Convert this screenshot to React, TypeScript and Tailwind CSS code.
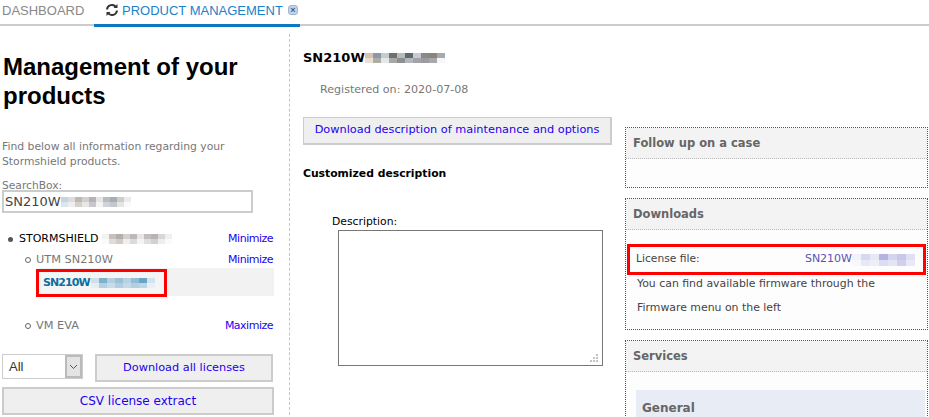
import React from 'react';

const FONT = "font-['DejaVu_Sans',sans-serif]";

// mosaic that hides the serial numbers
const Mosaic: React.FC<{ rows: string[][]; w?: number; h?: number }> = ({ rows, w = 7, h = 5 }) => (
  <svg width={rows[0].length * w} height={rows.length * h} className="block shrink-0">
    {rows.map((row, y) =>
      row.map((c, x) => <rect key={`${x}-${y}`} x={x * w} y={y * h} width={w} height={h} fill={c} />)
    )}
  </svg>
);

const greyRows = [
  ['#f4f2f0', '#c8c0bc', '#b4aeac', '#d4d0d0', '#bcb8ba', '#e6e4e6', '#c0bcc0', '#b8b2b4', '#d8d6d6', '#f0f0f0'],
  ['#fafafa', '#e0dcd8', '#d0ccca', '#f0eeee', '#dcdadc', '#f4f4f4', '#e0dee0', '#d4d0d0', '#eeeeee', '#fafafa'],
];
const inputRows = [
  ['#c4d4e0', '#dcdcdc', '#bcb8b4', '#d4d0d0', '#b4b4b8', '#e6e4e6', '#b8bcc0', '#a8acb4', '#d0ccc8', '#e8ecf0'],
  ['#dce6ee', '#eeeeee', '#d4d0cc', '#e8e6e6', '#c8c8cc', '#f4f4f4', '#d0d4d8', '#c4c8cc', '#e4e4e4', '#fafafa'],
];
const titleRows = [
  ['#d8c4ac', '#8a98aa', '#c4ccd0', '#70706e', '#b8bcb8', '#606870', '#c8ccd0', '#8a8a8c', '#8c8478', '#a8a8b0'],
  ['#e8e0d4', '#b0aca4', '#e4e8e8', '#a8a8a4', '#8c9090', '#b4b8bc', '#a4a4a8', '#9c9ca0', '#a8a8ac', '#f4f6f8'],
];
const blueRows = [
  ['#d0e0ea', '#7fb0cc', '#b4d0e0', '#9cc0d6', '#b8d2e2', '#94bcd4', '#6aa4c4', '#d4e4ee'],
  ['#e4eef4', '#b4d0e0', '#c8dce8', '#b0cee0', '#c4dae6', '#b4d0e0', '#bcd6e4', '#e8f0f6'],
];
const lilacRows = [
  ['#f2f2fa', '#d8d8f0', '#e8e8f6', '#b4b4e2', '#d4d4ee', '#c8c8ea', '#e0e0f4'],
  ['#f8f8fc', '#e8e8f6', '#eeeef8', '#dcdcf2', '#e4e4f4', '#d0d0ec', '#e8e8f6'],
];

const Panel: React.FC<{ title: string; className: string; children?: React.ReactNode }> = ({ title, className, children }) => (
  <div className={`border border-dotted border-[#555] bg-[#fdfdfd] ${className}`}>
    <div className="h-[31px] flex items-center pl-[7px] pt-[2px] bg-[#f3f3f3] border-b border-dotted border-[#bbb] text-[11.5px] font-bold text-[#666]">
      {title}
    </div>
    {children}
  </div>
);

const App: React.FC = () => {
  return (
    <div className={`w-[929px] h-[417px] overflow-hidden bg-white text-[12px] ${FONT}`}>
      {/* Tabs */}
      <div className="h-[26px] flex font-['Liberation_Sans',sans-serif] text-[13px] border-b-2 border-b-[#ccc]">
        <div className="pl-[2px] w-[94px] h-[22px] flex items-center text-[#888]">DASHBOARD</div>
        <div className="w-[206px] h-[27px] pl-[11px] flex items-center whitespace-nowrap border-b-[3px] border-b-[#0a78c2] text-[#1a82c8]">
          <svg width="14" height="14" viewBox="0 0 14 14" fill="none" stroke="#333" strokeWidth="2" className="mr-[3px] mb-[5px]">
            <path d="M2 6.5A5 5 0 0 1 11 4" />
            <path d="M12 7.5A5 5 0 0 1 3 10" />
            <path d="M12.5 1v4h-4z" fill="#333" strokeWidth="0" />
            <path d="M1.5 13V9h4z" fill="#333" strokeWidth="0" />
          </svg>
          <span className="pb-[2px]">PRODUCT MANAGEMENT</span>
          <span className="ml-[5px] mb-[5px] w-[10px] h-[10px] rounded-[3px] bg-[#c4d4ea] border border-[#9db4d4] text-[#44608c] text-[9px] leading-[8px] text-center font-bold">×</span>
        </div>
      </div>

      <div className="flex">
        {/* Left column */}
        <div className="w-[290px] h-[391px] shrink-0 mt-[8px] border-r border-dashed border-r-[#c4c4c4] pl-[2px]">
          <h1 className="mt-[18px] ml-[1px] w-[270px] text-[24px] leading-[29px] font-bold text-black font-['Liberation_Sans',sans-serif]">
            Management of your products
          </h1>
          <p className="mt-[29px] w-[280px] text-[10.8px] leading-[15px] text-[#777]">
            Find below all information regarding your Stormshield products.
          </p>
          <div className="mt-[9px] text-[10.7px] leading-[15px] text-[#777]">SearchBox:</div>
          <div className="w-[251px] h-[23px] -mt-[3px] border-2 border-[#ccc] flex items-center pl-[1px] text-[13px] text-[#444]">
            SN210W
            <Mosaic rows={inputRows} />
          </div>

          <div className="mt-[17px] w-[272px] flex flex-col">
            <div className="h-[18px] flex items-center">
              <span className="ml-[6px] mr-[6px] w-[5px] h-[5px] rounded-full bg-[#555]" />
              <span className="text-[11px] text-black">STORMSHIELD</span>
              <span className="ml-[3px]"><Mosaic rows={greyRows} /></span>
              <a className="ml-auto mr-[1px] text-[11px] tracking-[-0.5px] text-[#1c00f0]">Minimize</a>
            </div>
            <div className="mt-[3px] h-[18px] flex items-center">
              <span className="ml-[23px] mr-[5px] w-[6px] h-[6px] rounded-full border border-[#666]" />
              <span className="text-[11.3px] text-[#777]">UTM SN210W</span>
              <a className="ml-auto mr-[1px] text-[11px] tracking-[-0.5px] text-[#1c00f0]">Minimize</a>
            </div>
            <div className="h-[28px] ml-[34px] -mt-[1px] flex items-stretch">
              <div className="w-[2px]" />
              <div className="flex-1 bg-[#f2f2f2]">
                <div className="w-[131px] h-[28px] mt-[1px] -ml-[2px] border-[3px] border-[#f00] flex items-center pl-[4px] font-bold text-[11px] tracking-[-0.9px] text-[#0b6f9f] bg-[#f5f5f5]">
                  SN210W
                  <span className="ml-[1px]"><Mosaic rows={blueRows} w={8} h={5} /></span>
                </div>
              </div>
            </div>
            <div className="mt-[21px] h-[18px] flex items-center">
              <span className="ml-[23px] mr-[5px] w-[6px] h-[6px] rounded-full border border-[#666]" />
              <span className="text-[11.3px] text-[#777]">VM EVA</span>
              <a className="ml-auto mr-[1px] text-[11px] tracking-[-0.5px] text-[#1c00f0]">Maximize</a>
            </div>
          </div>

          <div className="mt-[19px] w-[272px] flex gap-[12px]">
            <div className="w-[81px] h-[25px] border border-[#ccc] flex items-stretch">
              <span className="flex-1 pl-[6px] flex items-center font-['Liberation_Sans',sans-serif] text-[13px] text-[#333]">All</span>
              <span className="w-[17px] border-2 border-[#bbb] bg-[#e4e4e4] flex items-center justify-center">
                <svg width="9" height="6" viewBox="0 0 9 6" fill="none" stroke="#555"><path d="M1 1l3.5 3.5L8 1" /></svg>
              </span>
            </div>
            <button className="w-[178px] h-[28px] bg-[#efefef] border-2 border-[#ccc] text-[11.3px] text-[#1c00f0]">Download all licenses</button>
          </div>
          <button className="mt-[5px] w-[272px] h-[28px] bg-[#efefef] border-2 border-[#ccc] text-[#1c00f0]">CSV license extract</button>
        </div>

        {/* Middle column */}
        <div className="w-[335px] shrink-0 pl-[13px] pt-[24px]">
          <div className="flex items-center h-[16px] text-[13px] font-bold text-black">
            SN210W
            <Mosaic rows={titleRows} w={8} h={5} />
          </div>
          <div className="mt-[16px] ml-[17px] text-[11.1px] leading-[15px] text-[#777]">Registered on: 2020-07-08</div>
          <button className="mt-[20px] w-[309px] h-[28px] bg-[#efefef] border border-[#ccc] border-b-2 border-r-2 text-[11.3px] text-[#1c00f0]">
            Download description of maintenance and options
          </button>
          <div className="mt-[21px] text-[10.8px] font-bold leading-[15px] text-black">Customized description</div>
          <div className="mt-[33px] ml-[29px] text-[10.8px] leading-[15px] text-black">Description:</div>
          <div className="relative ml-[35px] w-[265px] h-[136px] mt-[1px] border border-[#777]">
            <svg width="10" height="9" viewBox="0 0 10 9" fill="#c4c4c4" className="absolute right-[3px] bottom-[2px]">
              <rect x="7" y="0" width="2" height="2" />
              <rect x="4" y="3" width="2" height="2" />
              <rect x="7" y="3" width="2" height="2" />
              <rect x="1" y="6" width="2" height="2" />
              <rect x="4" y="6" width="2" height="2" />
              <rect x="7" y="6" width="2" height="2" />
            </svg>
          </div>
        </div>

        {/* Right column */}
        <div className="flex-1 pr-[1px] pt-[101px] flex flex-col gap-[10px]">
          <Panel title="Follow up on a case" className="h-[61px]" />
          <Panel title="Downloads" className="h-[132px]">
            <div className="mt-[14px] mx-[1px] h-[31px] border-[3px] border-[#f00] flex items-center pl-[6px] pr-[8px] text-[10.7px] text-[#444]">
              License file:
              <span className="ml-auto flex items-center text-[11px] text-[#5a50b8]">
                SN210W
                <Mosaic rows={lilacRows} w={9} h={6} />
              </span>
            </div>
            <p className="-mt-[3px] ml-[11px] text-[10.9px] leading-[24px] text-[#444]">
              You can find available firmware through the<br />Firmware menu on the left
            </p>
          </Panel>
          <Panel title="Services" className="h-[120px]">
            <div className="mt-[18px] ml-[10px] mr-[2px] h-[40px] pl-[6px] pt-[9px] bg-[#e8edf5] text-[12px] font-bold text-[#666]">General</div>
          </Panel>
        </div>
      </div>
    </div>
  );
};

export default App;
